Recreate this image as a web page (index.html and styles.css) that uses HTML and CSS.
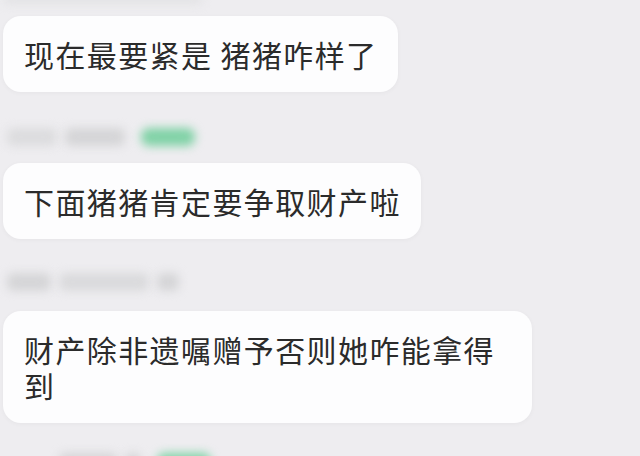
FILE: index.html
```html
<!DOCTYPE html>
<html lang="zh-CN">
<head>
    <meta charset="UTF-8">
    <meta name="viewport" content="width=device-width, initial-scale=1.0">
    <title>聊天记录</title>
    <link rel="stylesheet" href="styles.css">
</head>
<body>
    <div class="chat">
        <div class="meta meta-top">
            <span class="blur name wide"></span>
        </div>
        <div class="bubble">现在最要紧是 猪猪咋样了</div>

        <div class="meta">
            <span class="blur name n1"></span>
            <span class="blur name n2"></span>
            <span class="blur badge"></span>
        </div>
        <div class="bubble">下面猪猪肯定要争取财产啦</div>

        <div class="meta meta-plain">
            <span class="blur name n3"></span>
            <span class="blur name n4"></span>
            <span class="blur name n5"></span>
        </div>
        <div class="bubble">财产除非遗嘱赠予否则她咋能拿得到</div>

        <div class="meta meta-last">
            <span class="blur name n6"></span>
            <span class="blur name n7"></span>
            <span class="blur badge"></span>
        </div>
    </div>
</body>
</html>
```

FILE: styles.css
```css
html, body {
    margin: 0;
    height: 100%;
    overflow: hidden;
}
body {
    background-color: #eeedf0;
    font-family: "Noto Sans CJK SC", "Noto Sans", sans-serif;
    color: #2b2b2b;
}
.chat {
    display: flex;
    flex-direction: column;
    align-items: flex-start;
    padding-left: 3px;
}
.bubble {
    box-sizing: border-box;
    max-width: 529px;
    background: #fdfdfe;
    border-radius: 18px;
    padding: 20px 20px 20px 21px;
    font-size: 30px;
    line-height: 36px;
    letter-spacing: 1.4px;
    box-shadow: 0 1px 5px rgba(0, 0, 0, 0.04);
}
.meta {
    box-sizing: border-box;
    display: flex;
    align-items: flex-end;
    gap: 8px;
    height: 71px;
    padding: 0 0 17px 4px;
}
.meta-plain {
    height: 72px;
    padding-bottom: 20px;
}
.meta-top {
    height: 16px;
    padding: 0;
    align-items: flex-start;
}
.meta-last {
    height: 36px;
    padding: 0 0 0 56px;
    overflow: visible;
    align-items: flex-start;
}
.meta-last .blur {
    margin-top: 30px;
}
.blur {
    display: block;
    height: 18px;
    filter: blur(5px);
    border-radius: 6px;
}
.name {
    background: #d5d5d7;
}
.badge {
    width: 54px;
    height: 18px;
    background: #80d2a6;
    border-radius: 8px;
    margin-left: 8px;
}
.wide {
    width: 200px;
    height: 10px;
    margin-top: -6px;
    background: #e2e2e4;
}
.n1 { width: 50px; background: #dcdcde; }
.n2 { width: 60px; }
.n3 { width: 44px; }
.n4 { width: 90px; background: #dadadc; }
.n5 { width: 22px; }
.n6 { width: 58px; }
.n7 { width: 16px; }
```
